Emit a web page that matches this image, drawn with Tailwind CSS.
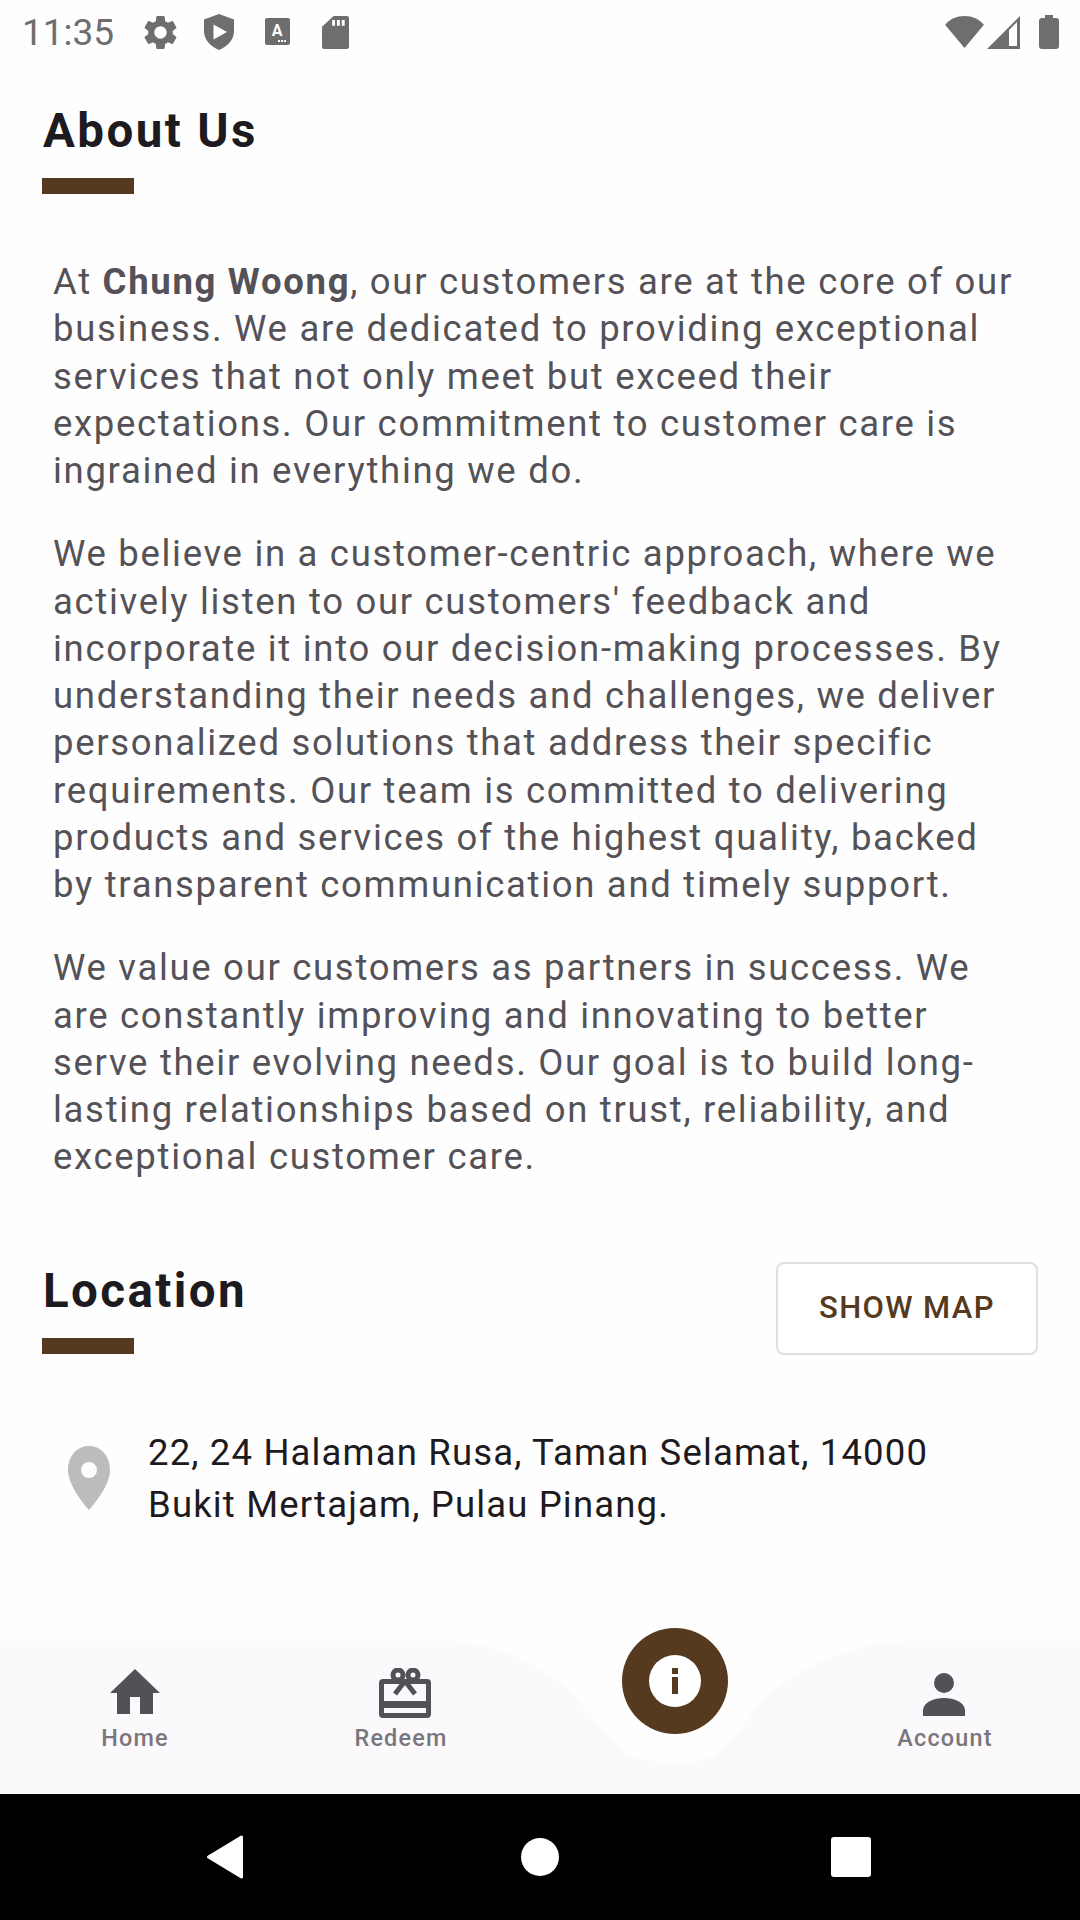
<!DOCTYPE html>
<html lang="en">
<head>
  <meta charset="UTF-8">
  <script src="https://cdn.jsdelivr.net/npm/@tailwindcss/browser@4"></script>
  <title>About Us</title>
</head>
<body class="bg-white">
  <div class="relative w-[1080px] h-[1920px] flex flex-col overflow-hidden bg-[#fffeff] font-['Roboto',sans-serif]">

    <!-- status bar -->
    <div class="h-[64px] flex items-center justify-between pl-[22px] pr-[21px] text-[#6e6d70]">
      <div class="flex items-center">
        <span class="text-[37px] leading-none w-[118px]">11:35</span>
        <svg class="w-[41px] h-[41px] mr-[21px]" viewBox="0 0 24 24" fill="#6e6d70"><path d="M19.14 12.94c.04-.3.06-.61.06-.94 0-.32-.02-.64-.07-.94l2.03-1.58a.49.49 0 0 0 .12-.61l-1.92-3.32a.488.488 0 0 0-.59-.22l-2.39.96c-.5-.38-1.03-.7-1.62-.94l-.36-2.54a.484.484 0 0 0-.48-.41h-3.84c-.24 0-.43.17-.47.41l-.36 2.54c-.59.24-1.13.57-1.62.94l-2.39-.96c-.22-.08-.47 0-.59.22L2.74 8.87c-.12.21-.08.47.12.61l2.03 1.58c-.05.3-.09.63-.09.94s.02.64.07.94l-2.03 1.58a.49.49 0 0 0-.12.61l1.92 3.32c.12.22.37.29.59.22l2.39-.96c.5.38 1.03.7 1.62.94l.36 2.54c.05.24.24.41.48.41h3.84c.24 0 .44-.17.47-.41l.36-2.54c.59-.24 1.13-.56 1.62-.94l2.39.96c.22.08.47 0 .59-.22l1.92-3.32c.12-.22.07-.47-.12-.61l-2.01-1.58zM12 15.6c-1.98 0-3.6-1.62-3.6-3.6s1.62-3.6 3.6-3.6 3.6 1.62 3.6 3.6-1.62 3.6-3.6 3.6z"/></svg>
        <svg class="w-[34px] h-[36px] mr-[29px]" viewBox="0 0 34 36"><path fill="#6e6d70" d="M17 0 32 5.5V17c0 9-6.5 15.500-15 19C8.500 32.500 2 26 2 17V5.500z"/><path fill="#fff" d="M11.500 10.500 25 18l-13.500 7.500z"/></svg>
        <svg class="w-[26px] h-[28px] mr-[31px]" viewBox="0 0 26 28"><rect width="25" height="27" rx="2" fill="#6e6d70"/><text x="12" y="18" text-anchor="middle" font-size="16" font-weight="700" fill="#fff" font-family="Roboto">A</text><path stroke="#fff" stroke-width="2" stroke-dasharray="2 1" d="M13 23h9"/></svg>
        <svg class="w-[27px] h-[33px]" viewBox="0 0 28 34"><path fill="#6e6d70" d="M12 0h14c1 0 2 1 2 2v30c0 1-1 2-2 2H2c-1 0-2-1-2-2V11z"/><path stroke="#fff" stroke-width="3" d="M12 4v6M17 4v6M22 4v6"/></svg>
      </div>
      <div class="flex items-center">
        <svg class="w-[39px] h-[33px] mr-[3px]" viewBox="0 0 40 34"><path fill="#6e6d70" d="M0 9C5 3.500 12 0 20 0s15 3.500 20 9L20 33z"/></svg>
        <svg class="w-[33px] h-[33px] mr-[19px]" viewBox="0 0 33 33"><path fill="#6e6d70" fill-rule="evenodd" d="M33 0v33H0zM30 6 22 14v16h8z"/></svg>
        <svg class="w-[20px] h-[34px]" viewBox="0 0 20 34"><path fill="#6e6d70" d="M6 0h8v3h3c2 0 3 1 3 3v25c0 2-1 3-3 3H3c-2 0-3-1-3-3V6c0-2 1-3 3-3h3z"/></svg>
      </div>
    </div>

    <!-- about us -->
    <div class="pl-[42px] pt-[41px]">
      <h1 class="text-[47.5px] leading-[52px] font-bold tracking-[2.4px] text-[#1d1b20] pl-[1px]">About Us</h1>
      <div class="w-[92px] h-[16px] mt-[21px] bg-[#553a20]"></div>
    </div>

    <div class="pl-[53px] pt-[64px] text-[36.5px] leading-[47.25px] tracking-[1.69px] text-[#545257] space-y-[36px] whitespace-nowrap">
      <p>At <b class="font-bold">Chung Woong</b>, our customers are at the core of our<br>business. We are dedicated to providing exceptional<br>services that not only meet but exceed their<br>expectations. Our commitment to customer care is<br>ingrained in everything we do.</p>
      <p>We believe in a customer-centric approach, where we<br>actively listen to our customers' feedback and<br>incorporate it into our decision-making processes. By<br>understanding their needs and challenges, we deliver<br>personalized solutions that address their specific<br>requirements. Our team is committed to delivering<br>products and services of the highest quality, backed<br>by transparent communication and timely support.</p>
      <p>We value our customers as partners in success. We<br>are constantly improving and innovating to better<br>serve their evolving needs. Our goal is to build long-<br>lasting relationships based on trust, reliability, and<br>exceptional customer care.</p>
    </div>

    <!-- location -->
    <div class="flex justify-between pl-[42px] pr-[42px] pt-[81px]">
      <div class="pt-[3px]">
        <h2 class="text-[47.5px] leading-[52px] font-bold tracking-[2.4px] text-[#1d1b20] pl-[1px]">Location</h2>
        <div class="w-[92px] h-[16px] mt-[21px] bg-[#553a20]"></div>
      </div>
      <button class="w-[262px] h-[93px] rounded-[8px] border-2 border-[#dfdee0] bg-white text-[31px] font-medium tracking-[1.4px] text-[#553a20]">SHOW MAP</button>
    </div>

    <div class="flex pl-[68px] pt-[72px]">
      <svg class="w-[42px] h-[64px] mt-[19px] shrink-0" viewBox="0 0 42 64"><path fill="#bdbbbe" fill-rule="evenodd" d="M21 0C9 0 0 10 0 24c0 13 12 30 21 40 9-10 21-27 21-40C42 10 33 0 21 0zm0 16a8 8 0 1 1 0 16 8 8 0 0 1 0-16z"/></svg>
      <p class="ml-[38px] text-[36.5px] leading-[52px] tracking-[1.15px] text-[#1d1b20] whitespace-nowrap">22, 24 Halaman Rusa, Taman Selamat, 14000<br>Bukit Mertajam, Pulau Pinang.</p>
    </div>

    <!-- bottom nav -->
    <div class="absolute left-0 top-[1641px] w-full h-[153px] bg-[#fbf9fc]">
      <svg class="absolute left-[110px] top-[28px] w-[50px] h-[46px]" viewBox="0 0 50 46"><path fill="#535156" d="M25 0 50 24H43V45H30V28H20V45H7V24H0z"/></svg>
      <svg class="absolute left-[379px] top-[27px] w-[52px] h-[50px]" viewBox="0 0 52 50"><path fill="#535156" fill-rule="evenodd" d="M4 11h44a4 4 0 0 1 4 4v31a4 4 0 0 1-4 4H4a4 4 0 0 1-4-4V15a4 4 0 0 1 4-4zm1 5v17h42V16zm0 24v5h42v-5z"/><g fill="none" stroke="#535156" stroke-width="5"><circle cx="19" cy="7" r="5"/><circle cx="34" cy="7" r="5"/><path d="M26 13 16 26M26 13 36 26"/></g></svg>
      <svg class="absolute left-[923px] top-[32px] w-[42px] h-[43px]" viewBox="0 0 42 43"><circle cx="21" cy="10" r="10" fill="#535156"/><path fill="#535156" d="M0 43v-5c0-9 11-13 21-13s21 4 21 13v5z"/></svg>
      <span class="absolute left-0 top-[84px] w-[270px] text-center text-[23.4px] leading-[26px] font-medium tracking-[1.2px] text-[#79777c]">Home</span>
      <span class="absolute left-[266px] top-[84px] w-[270px] text-center text-[23.4px] leading-[26px] font-medium tracking-[1.2px] text-[#79777c]">Redeem</span>
      <span class="absolute left-[810px] top-[84px] w-[270px] text-center text-[23.4px] leading-[26px] font-medium tracking-[1.2px] text-[#79777c]">Account</span>
    </div>

    <!-- notch behind the middle button -->
    <svg class="absolute left-[440px] top-[1640px] w-[480px] h-[124px]" viewBox="0 0 480 124"><path fill="#fffeff" d="M0 0C40 2 80 14 113 37 145 60 165 100 190 115 205 123 250 126 270 118 295 105 305 80 317 67 340 42 370 22 413 10 435 4 450 1 480 0z"/></svg>

    <div class="absolute left-[622px] top-[1628px] w-[106px] h-[106px] rounded-full bg-[#553a20] flex items-center justify-center">
      <div class="w-[52px] h-[52px] rounded-full bg-white flex flex-col items-center justify-center">
        <div class="w-[6px] h-[6px] bg-[#553a20]"></div>
        <div class="w-[6px] h-[17px] mt-[3px] bg-[#553a20]"></div>
      </div>
    </div>

    <!-- system nav -->
    <div class="absolute left-0 top-[1794px] w-full h-[126px] bg-black">
      <svg class="absolute left-[206px] top-[41px] w-[38px] h-[44px]" viewBox="0 0 37 44"><path fill="#fff" stroke="#fff" stroke-width="3" stroke-linejoin="round" d="M35 2V42L2 22z"/></svg>
      <div class="absolute left-[521px] top-[44px] w-[38px] h-[38px] rounded-full bg-white"></div>
      <div class="absolute left-[831px] top-[43px] w-[40px] h-[40px] rounded-[3px] bg-white"></div>
    </div>
  </div>
</body>
</html>
